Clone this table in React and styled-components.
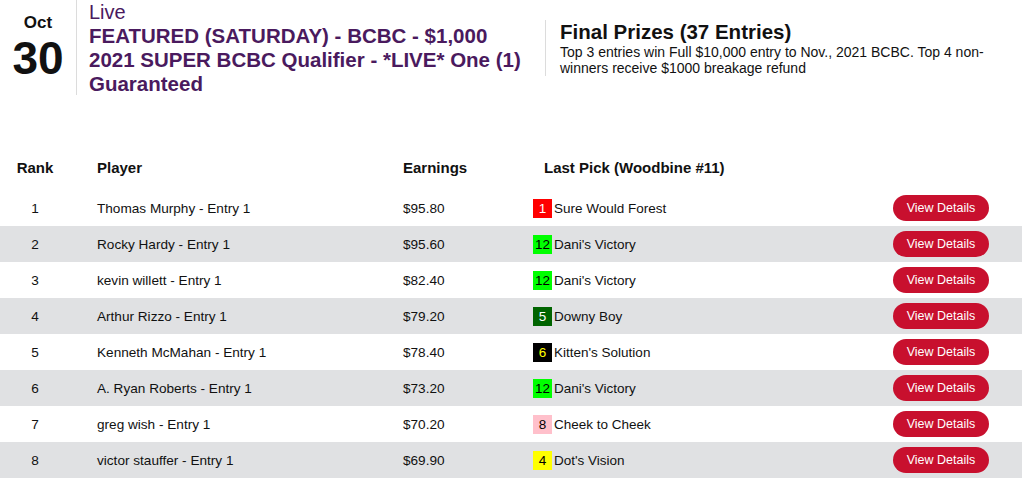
import React from "react";
import styled, { createGlobalStyle } from "styled-components";

const Global = createGlobalStyle`
  html, body { margin: 0; padding: 0; background: #fff; }
  body { font-family: "Liberation Sans", Arial, Helvetica, sans-serif; color: #111; }
`;

const Page = styled.div`
  width: 1022px;
  height: 478px;
  overflow: hidden;
`;

const Top = styled.header`
  display: flex;
  align-items: flex-start;
  height: 150px;
`;

const DateBlock = styled.div`
  width: 77px;
  height: 95px;
  border-right: 1px solid #dcdcdc;
  display: flex;
  flex-direction: column;
  align-items: center;
  padding-top: 13px;
  box-sizing: border-box;
  font-weight: 700;
`;

const Month = styled.div`
  font-size: 17px;
  line-height: 19px;
`;

const Day = styled.div`
  font-size: 46px;
  line-height: 52px;
`;

const TitleBlock = styled.div`
  width: 468px;
  padding: 0 0 0 12px;
  color: #4a1a5e;
  box-sizing: border-box;
`;

const Status = styled.div`
  font-size: 20px;
  line-height: 24px;
`;

const Title = styled.div`
  font-size: 20.5px;
  line-height: 24px;
  font-weight: 700;
  width: 442px;
`;

const Prizes = styled.div`
  margin-top: 20px;
  border-left: 1px solid #dcdcdc;
  padding-left: 14px;
  width: 445px;
`;

const PrizeHead = styled.div`
  font-size: 20.5px;
  line-height: 24px;
  font-weight: 700;
`;

const PrizeText = styled.div`
  font-size: 14px;
  line-height: 16px;
`;

const Grid = styled.div`
  display: grid;
  grid-template-columns: 70px 333px 130px 1fr 129px;
  align-items: center;
  box-sizing: border-box;
  height: ${(p) => (p.$head ? 40 : 36)}px;
  padding-bottom: ${(p) => (p.$head ? 6 : 0)}px;
  background: ${(p) => (p.$shade ? "#e0e1e3" : "transparent")};
  font-weight: ${(p) => (p.$head ? 700 : 400)};
  font-size: ${(p) => (p.$head ? 15 : 13.6)}px;
`;

const RankCell = styled.div`
  text-align: center;
`;

const PlayerCell = styled.div`
  padding-left: 27px;
`;

const PickHead = styled.div`
  padding-left: 11px;
`;

const PickCell = styled.div`
  display: flex;
  align-items: center;
  font-size: 13.5px;
`;

const Badge = styled.span`
  width: 19px;
  height: 19px;
  display: inline-flex;
  align-items: center;
  justify-content: center;
  font-size: 13.5px;
  background: ${(p) => p.$bg};
  color: ${(p) => p.$fg};
  margin-right: 2px;
`;

const Btn = styled.button`
  width: 96px;
  height: 26px;
  border: none;
  border-radius: 13px;
  background: #c8102e;
  color: #fff;
  font-family: "Liberation Sans", Arial, sans-serif;
  font-size: 12.5px;
  padding: 0;
  cursor: pointer;
`;

const colors = {
  1: ["#ff0000", "#fff"],
  12: ["#00ff00", "#000"],
  5: ["#006400", "#fff"],
  6: ["#000", "#ffff00"],
  8: ["#ffc0cb", "#000"],
  4: ["#ffff00", "#000"],
};

const rows = [
  [1, "Thomas Murphy - Entry 1", "$95.80", 1, "Sure Would Forest"],
  [2, "Rocky Hardy - Entry 1", "$95.60", 12, "Dani's Victory"],
  [3, "kevin willett - Entry 1", "$82.40", 12, "Dani's Victory"],
  [4, "Arthur Rizzo - Entry 1", "$79.20", 5, "Downy Boy"],
  [5, "Kenneth McMahan - Entry 1", "$78.40", 6, "Kitten's Solution"],
  [6, "A. Ryan Roberts - Entry 1", "$73.20", 12, "Dani's Victory"],
  [7, "greg wish - Entry 1", "$70.20", 8, "Cheek to Cheek"],
  [8, "victor stauffer - Entry 1", "$69.90", 4, "Dot's Vision"],
];

export default function App() {
  return (
    <Page>
      <Global />
      <Top>
        <DateBlock>
          <Month>Oct</Month>
          <Day>30</Day>
        </DateBlock>
        <TitleBlock>
          <Status>Live</Status>
          <Title>
            FEATURED (SATURDAY) - BCBC - $1,000 2021 SUPER BCBC Qualifier - *LIVE* One (1) Guaranteed
          </Title>
        </TitleBlock>
        <Prizes>
          <PrizeHead>Final Prizes (37 Entries)</PrizeHead>
          <PrizeText>
            Top 3 entries win Full $10,000 entry to Nov., 2021 BCBC. Top 4 non-winners receive $1000 breakage refund
          </PrizeText>
        </Prizes>
      </Top>
      <Grid $head>
        <RankCell>Rank</RankCell>
        <PlayerCell>Player</PlayerCell>
        <div>Earnings</div>
        <PickHead>Last Pick (Woodbine #11)</PickHead>
        <div />
      </Grid>
      {rows.map(([rank, player, earn, num, horse], i) => (
        <Grid key={rank} $shade={i % 2 === 1}>
          <RankCell>{rank}</RankCell>
          <PlayerCell>{player}</PlayerCell>
          <div>{earn}</div>
          <PickCell>
            <Badge $bg={colors[num][0]} $fg={colors[num][1]}>{num}</Badge>
            {horse}
          </PickCell>
          <div>
            <Btn>View Details</Btn>
          </div>
        </Grid>
      ))}
    </Page>
  );
}
